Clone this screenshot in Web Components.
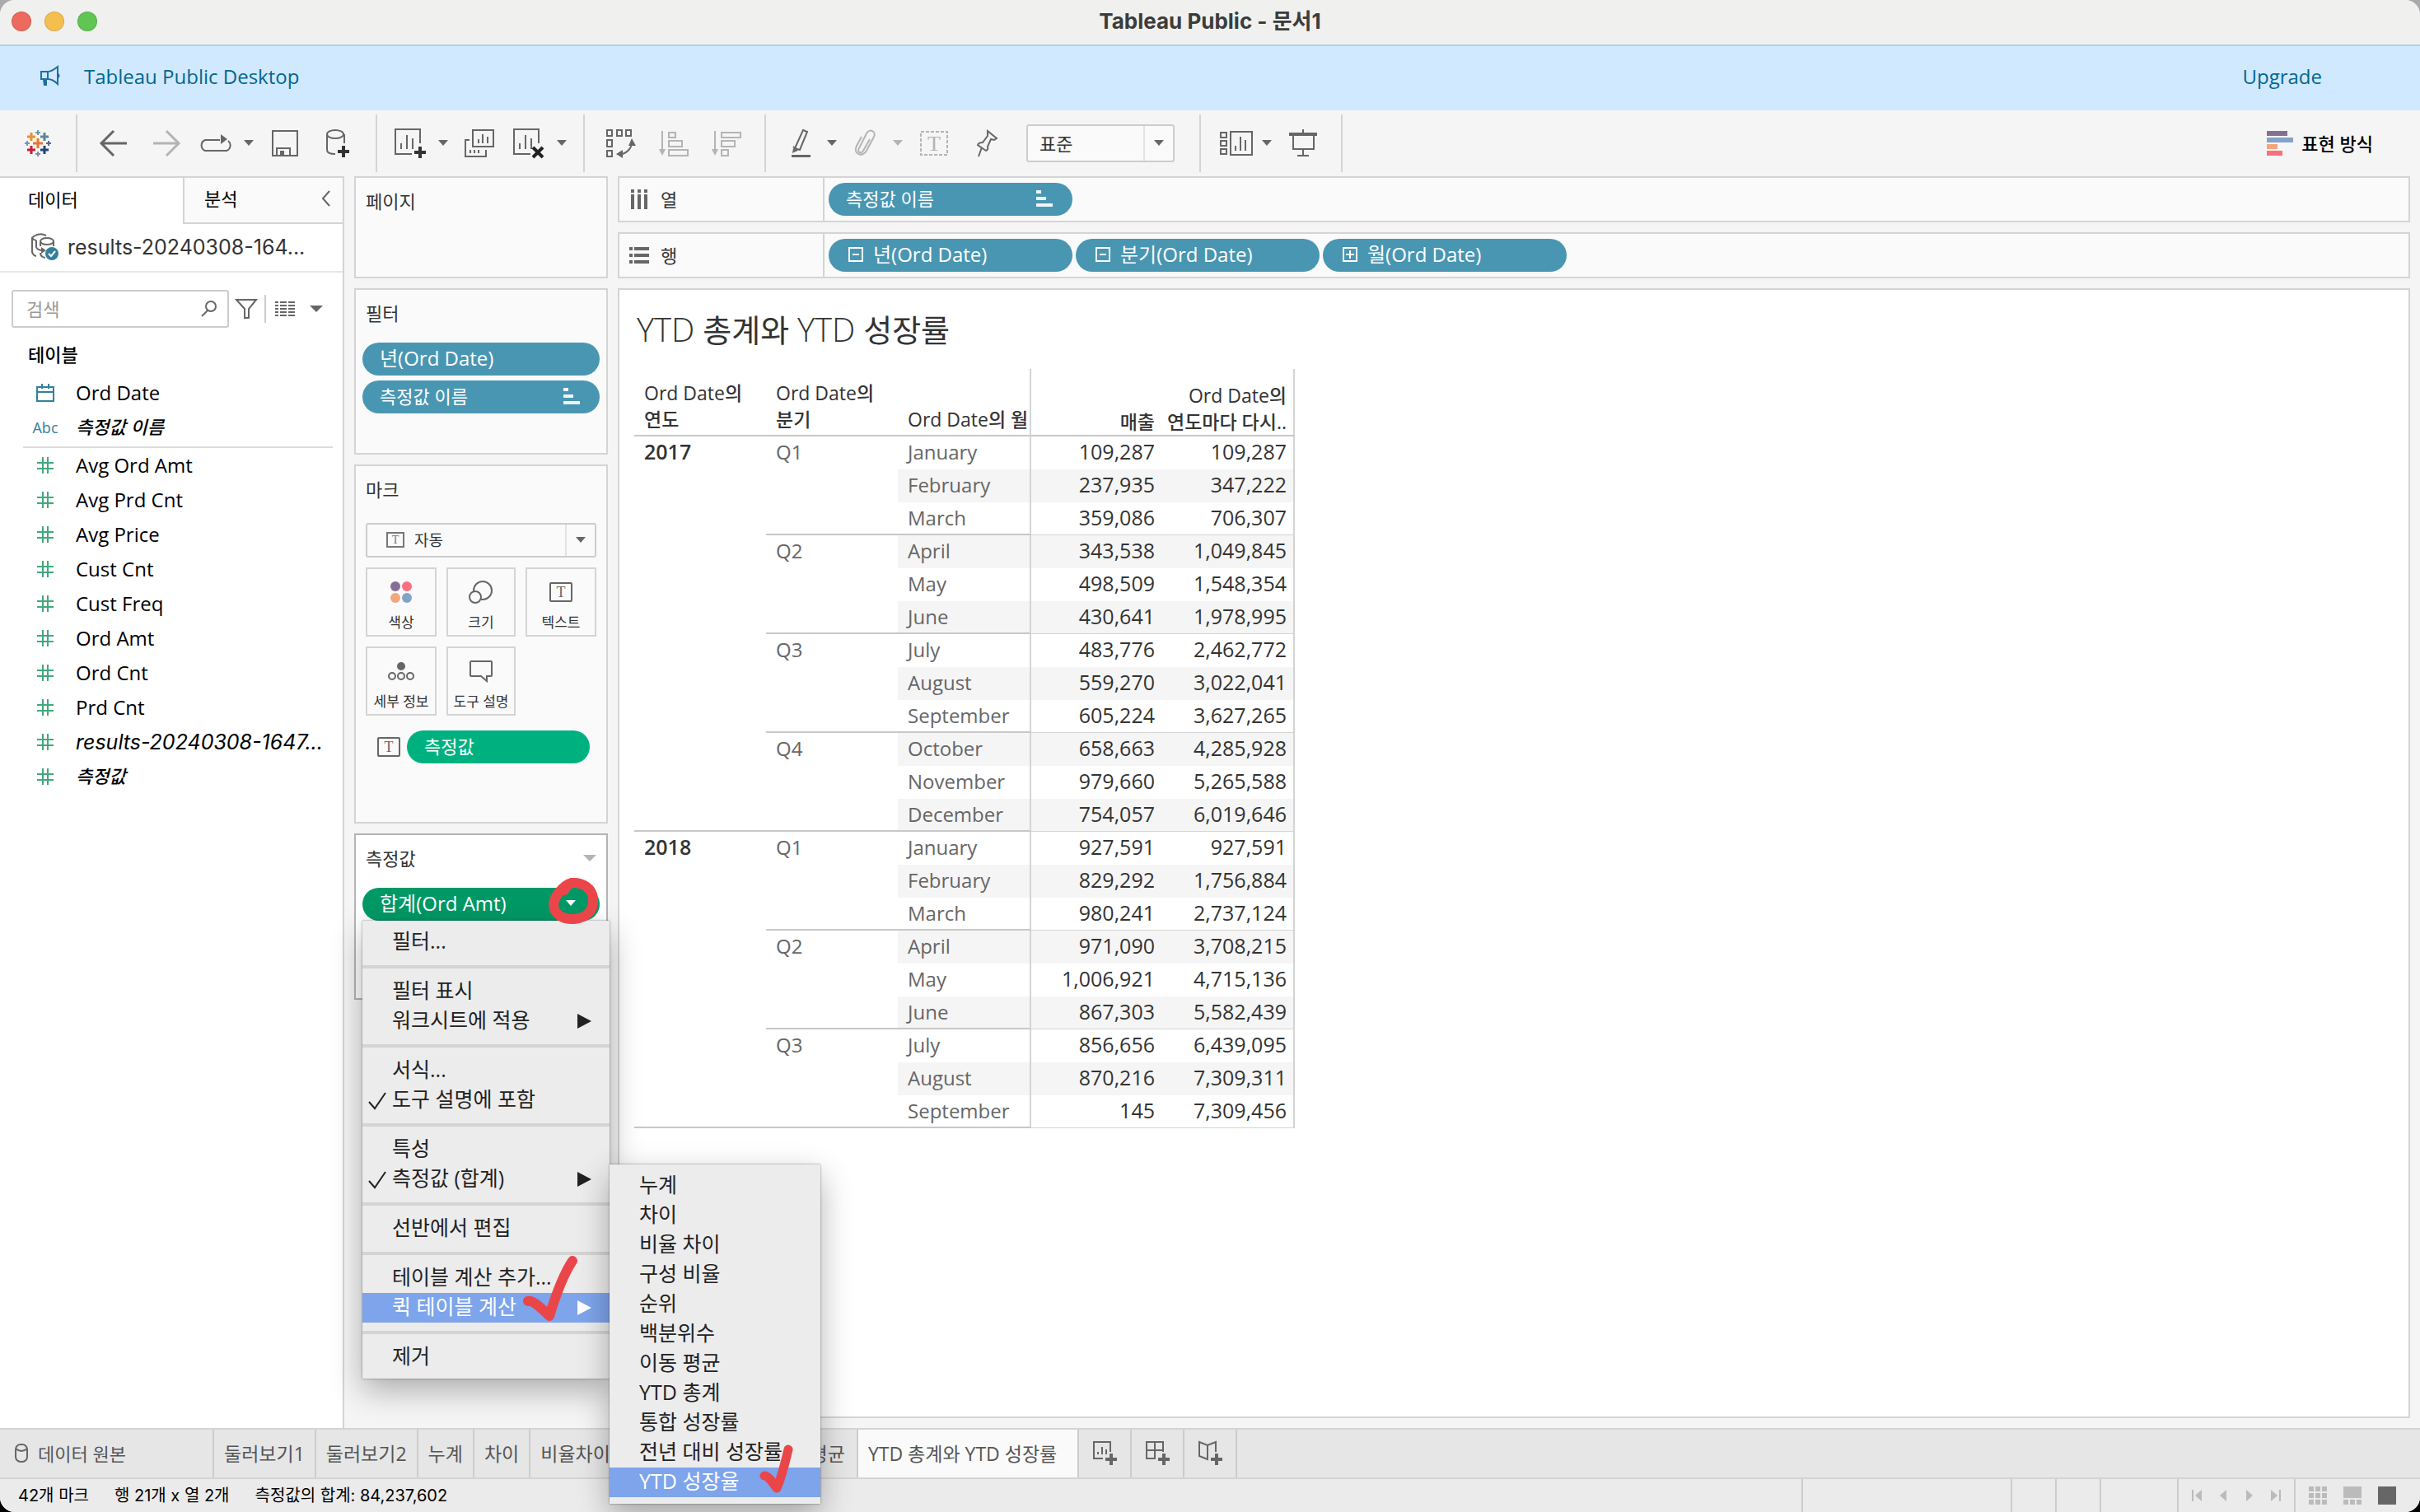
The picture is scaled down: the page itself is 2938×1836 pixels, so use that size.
<!DOCTYPE html>
<html lang="ko">
<head>
<meta charset="utf-8">
<meta name="viewport" content="width=device-width, initial-scale=1">
<title>Tableau Public - 문서1</title>
<style>
	html {
		background: linear-gradient( #aaa 50%, #000 50% ) fixed;
	}
	body {
		margin: 0;
		font-family: "Open Sans", "Noto Sans CJK KR", sans-serif;
		font-size: 22px;
		line-height: 30px;
		color: #333;
		--line: #d4d4d4;
		--blue: #4996b2;
		--green: #00b180;
		--wide: Inter, "Noto Sans CJK KR", sans-serif;
	}
</style>
</head>
<body>
<app-window></app-window>

<script>
const ICONS = {
	logo: [32, 32, `<g fill="none" stroke-width="3"><path stroke="#eb912c" d="M8 3v10M3 8h10"/><path stroke="#5b879b" d="M24 3v10M19 8h10"/><path stroke="#e8762c" d="M16 10v12M10 16h12"/><path stroke="#c72035" d="M8 19v10M3 24h10"/><path stroke="#1f447e" d="M24 19v10M19 24h10"/></g><g fill="none" stroke-width="2"><path stroke="#7099a6" d="M16 0v6M13 3h6"/><path stroke="#7099a6" d="M3 13v6M0 16h6"/><path stroke="#59669a" d="M29 13v6M26 16h6"/><path stroke="#7b8cb5" d="M16 26v6M13 29h6"/></g>`],
	horn: [26, 26, `<g fill="none" stroke="#1f6ea0" stroke-width="2"><path d="M2 7h8c5 0 8-3 12-6v21c-4-4-7-6-12-6H2zM10 7v9"/></g><path fill="#1f6ea0" d="M4 16h5v8H5zM22 8q5 4 0 8z"/>`],
	back: [34, 32, `<path d="M33 16H3M17 1 2 16l15 15" fill="none" stroke="#666" stroke-width="3"/>`],
	forward: [34, 32, `<path d="M1 16h30M17 1l15 15-15 15" fill="none" stroke="#b4b4b4" stroke-width="3"/>`],
	redo: [42, 22, `<path d="M26 7H8a7 7 0 0 0 0 13h26a7 7 0 0 0 2-12" fill="none" stroke="#666" stroke-width="2"/><path d="M27 0l8 6-8 6z" fill="#666"/>`],
	save: [32, 32, `<path d="M1 1h30v30H1zM6 31V22h16v9" fill="none" stroke="#666" stroke-width="2"/><path fill="#666" d="M10 25h5v6h-5z"/>`],
	data: [30, 34, `<path d="M2 6v19q0 5 10 5M23 6v11" fill="none" stroke="#666" stroke-width="2"/><ellipse cx="12" cy="6" rx="10" ry="5" fill="none" stroke="#666" stroke-width="2"/><path d="M22 20v14M15 27h14" stroke="#333" stroke-width="4"/>`],
	newsheet: [38, 36, `<path d="M31 18V1H1v30h20M8 25v-7M15 25V8M22 25V12" fill="none" stroke="#666" stroke-width="2"/><path d="M31 22v14M24 29h14" stroke="#333" stroke-width="4"/>`],
	duplicate: [36, 34, `<path d="M10 1h25v20H10zM6 13H1v20h25V25M17 17v-5M22 17V6M28 17V9M7 29v-4M12 29v-4M17 29v-4" fill="none" stroke="#666" stroke-width="2"/>`],
	clear: [38, 36, `<path d="M31 18V1H1v30h20M8 25v-7M15 25V8M22 25V12" fill="none" stroke="#666" stroke-width="2"/><path d="M24 23l12 12M36 23 24 35" stroke="#222" stroke-width="4"/>`],
	swap: [36, 36, `<path d="M1 2h6v7H1zM13 2h6v7h-6zM24 2h6v7h-6zM1 14h6v8H1zM1 27h6v7H1zM17 32q14-4 14-16" fill="none" stroke="#666" stroke-width="2"/><path d="M31 12l5 9h-9zM12 31l8-5v10z" fill="#666"/>`],
	sortasc: [36, 32, `<path d="M4 1v25M12 3h8v6h-8zM12 13h16v7H12zM12 24h23v7H12z" fill="none" stroke="#b4b4b4" stroke-width="2"/><path d="M0 23h8l-4 8z" fill="#b4b4b4"/>`],
	sortdesc: [36, 32, `<path d="M4 1v25M12 3h23v6H12zM12 13h16v7H12zM12 24h8v7h-8z" fill="none" stroke="#b4b4b4" stroke-width="2"/><path d="M0 23h8l-4 8z" fill="#b4b4b4"/>`],
	pen: [18, 36, `<path d="M14 2l5 2-9 22-6-2zM2 22l5 5" fill="none" stroke="#666" stroke-width="2"/><path d="M2 24l5 3-6 3zM0 32h23v3H0z" fill="#666"/>`],
	clip: [26, 34, `<path d="M19 12l-8 14c-3 5-8 1-5-3L15 5c4-7 12-2 9 4l-9 17c-5 9-17 4-12-6L9 9" fill="none" stroke="#b4b4b4" stroke-width="2"/>`],
	textmark: [34, 30, `<path d="M1 1h32v28H1z" fill="none" stroke="#b4b4b4" stroke-width="2" stroke-dasharray="4 2"/><text x="17" y="24" font-family="Liberation Serif, serif" font-size="26" text-anchor="middle" fill="#b4b4b4">T</text>`],
	pin: [28, 34, `<path d="M15 2l11 9-3 2-4-1-4 9q1 4-2 5l-10-7q1-3 6-3l6-8zM8 22l-4 11" fill="none" stroke="#666" stroke-width="2"/>`],
	cards: [34, 30, `<path d="M1 2h7v6H1zM1 12h7v6H1zM1 22h7v6H1zM13 1h26v28H13zM19 24v-6M25 24V7M31 24V11" fill="none" stroke="#666" stroke-width="2"/>`],
	present: [34, 34, `<path d="M17 0v4M5 6v18h25V6M17 24v8M10 32h14" fill="none" stroke="#666" stroke-width="2"/><path d="M0 4h34v4H0z" fill="#666"/>`],
	showme: [32, 30, `<path fill="#866f97" d="M0 0h25v6H0z"/><path fill="#83a4c8" d="M0 8h32v6H0z"/><path fill="#f3a67c" d="M0 16h13v6H0z"/><path fill="#f8707f" d="M0 24h19v6H0z"/>`],
	caret: [14, 8, `<path d="M1 0h12L7 7z" fill="currentColor"/>`],
	caretwide: [16, 8, `<path d="M0 0h16L8 8z" fill="currentColor"/>`],
	chevron: [12, 20, `<path d="M10 1 2 10l8 9" fill="none" stroke="#666" stroke-width="2"/>`],
	source: [34, 34, `<g fill="none" stroke="#666" stroke-width="2"><path d="M18 3Q10-1 3 4q-4 3 3 5M1 5v18q1 4 5 5M6 9v8q1 3 6 4M11 24q0 5 6 6"/><ellipse cx="19" cy="10" rx="8" ry="4"/><path d="M11 10v6M27 10v6"/></g><path d="M12 17l6 4-6 4z" fill="#666"/><circle cx="25" cy="25" r="8" fill="#33809e"/><path d="M21 25l3 3 5-6" fill="none" stroke="#fff" stroke-width="2"/>`],
	search: [20, 20, `<circle cx="12" cy="7" r="6" fill="none" stroke="#666" stroke-width="2"/><path d="M8 12l-7 7" stroke="#666" stroke-width="2"/>`],
	funnel: [26, 24, `<path d="M1 1h24l-9 11v11h-5V12z" fill="none" stroke="#666" stroke-width="2"/>`],
	list: [24, 18, `<path d="M0 1h4M0 5h4M0 9h4M0 13h4M0 17h4M6 1h8M6 5h8M6 9h8M6 13h8M6 17h8M16 1h8M16 5h8M16 9h8M16 13h8M16 17h8" stroke="#666" stroke-width="2"/>`],
	calendar: [22, 22, `<path d="M1 4h20v17H1zM1 10h20M7 0v6M15 0v6" fill="none" stroke="#33809e" stroke-width="2"/>`],
	abc: [34, 22, `<text x="17" y="18" font-family="Open Sans, sans-serif" font-size="18" font-weight="500" font-style="normal" text-anchor="middle" fill="#33809e">Abc</text>`],
	hash: [20, 20, `<path d="M7 0v20M13 0v20M0 7h20M0 14h20" stroke="#40a97c" stroke-width="2"/>`],
	columns: [20, 24, `<path d="M2 0v4M10 0v4M18 0v4M2 6v18M10 6v18M18 6v18" stroke="#666" stroke-width="4"/>`],
	rows: [24, 20, `<path d="M0 2h4M0 10h4M0 18h4M6 2h18M6 10h18M6 18h18" stroke="#666" stroke-width="4"/>`],
	sorted: [20, 20, `<path d="M0 2h6M0 10h12M0 18h20" stroke="#eef4f8" stroke-width="4"/>`],
	minus: [18, 18, `<path d="M1 1h16v16H1zM5 9h8" fill="none" stroke="#fff" stroke-width="2"/>`],
	plus: [18, 18, `<path d="M1 1h16v16H1zM4 9h10M9 4v10" fill="none" stroke="#fff" stroke-width="2"/>`],
	color: [26, 26, `<circle cx="6" cy="6" r="6" fill="#866f97"/><circle cx="20" cy="6" r="6" fill="#f8707f"/><circle cx="6" cy="20" r="6" fill="#f3a67c"/><circle cx="20" cy="20" r="6" fill="#83a4c8"/>`],
	size: [30, 28, `<g fill="#fafafa" stroke="#666" stroke-width="2"><circle cx="17" cy="12" r="11"/><circle cx="8" cy="20" r="7"/></g>`],
	text: [28, 24, `<rect x="1" y="1" width="26" height="22" rx="1" fill="none" stroke="#666" stroke-width="2"/><text x="14" y="18" font-family="Liberation Serif, serif" font-size="18" text-anchor="middle" fill="#666">T</text>`],
	textsmall: [22, 20, `<path d="M1 1h20v17H1z" fill="none" stroke="#777" stroke-width="2"/><text x="11" y="14" font-family="Liberation Serif, serif" font-size="14" text-anchor="middle" fill="#777">T</text>`],
	detail: [32, 22, `<circle cx="16" cy="5" r="5" fill="#666"/><g fill="none" stroke="#666" stroke-width="2"><circle cx="5" cy="17" r="4"/><circle cx="16" cy="17" r="4"/><circle cx="27" cy="17" r="4"/></g>`],
	tooltip: [28, 26, `<path d="M2 1h24q1 0 1 1v16q0 1-1 1h-5v6l-7-6H2q-1 0-1-1V2q0-1 1-1z" fill="none" stroke="#666" stroke-width="2"/>`],
	cylinder: [16, 24, `<rect x="1" y="1" width="14" height="21" rx="6" fill="none" stroke="#666" stroke-width="2"/><path d="M1 6q7 6 14 0" fill="none" stroke="#666" stroke-width="2"/>`],
	addsheet: [28, 30, `<path d="M21 13V1H1v20h11M6 16v-3M11 16V7M16 16v-6" fill="none" stroke="#666" stroke-width="2"/><path d="M22 15v14M15 22h14" stroke="#666" stroke-width="4"/>`],
	adddash: [28, 30, `<path d="M21 13V1H1v20h11M11 1v20M1 11h20" fill="none" stroke="#666" stroke-width="2"/><path d="M22 15v14M15 22h14" stroke="#666" stroke-width="4"/>`],
	addstory: [28, 30, `<path d="M21 13V1L11 5 1 1v17l10 4V5" fill="none" stroke="#666" stroke-width="2"/><path d="M22 15v14M15 22h14" stroke="#666" stroke-width="4"/>`],
	first: [12, 14, `<path d="M0 0h2v14H0zM12 0v14L4 7z" fill="#bbb"/>`],
	prev: [12, 14, `<path d="M10 0v14L2 7z" fill="#bbb"/>`],
	next: [12, 14, `<path d="M2 0v14l8-7z" fill="#bbb"/>`],
	last: [12, 14, `<path d="M10 0h2v14h-2zM0 0v14l8-7z" fill="#bbb"/>`],
	grid: [22, 22, `<path d="M0 3h6M8 3h6M16 3h6M0 11h6M8 11h6M16 11h6M0 19h6M8 19h6M16 19h6" stroke="#bbb" stroke-width="6"/>`],
	strip: [22, 22, `<path d="M0 0h22v14H0zM0 16h6v6H0zM8 16h6v6H8zM16 16h6v6h-6z" fill="#bbb"/>`],
	single: [22, 22, `<path d="M0 0h22v22H0z" fill="#666"/>`],
	tick: [22, 22, `<path d="M1 12l7 8L21 1" fill="none" stroke="#222" stroke-width="2"/>`],
	arrow: [18, 18, `<path d="M1 0v18l17-9z" fill="currentColor"/>`],
	inkring: [62, 60, `<path d="M29 8C18 11 7 26 7 35c1 12 13 18 25 17 14-1 24-9 23-25C54 15 43 7 29 8c-4 2-7 6-9 9" fill="none" stroke="#ea464a" stroke-width="12" stroke-linecap="round"/>`],
	inktick: [68, 80, `<path d="M8 56q5-3 26 18Q48 28 62 7" fill="none" stroke="#ea464a" stroke-width="12" stroke-linecap="round" stroke-linejoin="round"/>`],
	inkticksmall: [46, 62, `<path d="M9 40q4-1 15 15Q30 42 38 8" fill="none" stroke="#ea464a" stroke-width="11" stroke-linecap="round" stroke-linejoin="round"/>`]
};

const SALES = [
	['2017', [
		['Q1', [['January', '109,287', '109,287'], ['February', '237,935', '347,222'], ['March', '359,086', '706,307']]],
		['Q2', [['April', '343,538', '1,049,845'], ['May', '498,509', '1,548,354'], ['June', '430,641', '1,978,995']]],
		['Q3', [['July', '483,776', '2,462,772'], ['August', '559,270', '3,022,041'], ['September', '605,224', '3,627,265']]],
		['Q4', [['October', '658,663', '4,285,928'], ['November', '979,660', '5,265,588'], ['December', '754,057', '6,019,646']]]
	]],
	['2018', [
		['Q1', [['January', '927,591', '927,591'], ['February', '829,292', '1,756,884'], ['March', '980,241', '2,737,124']]],
		['Q2', [['April', '971,090', '3,708,215'], ['May', '1,006,921', '4,715,136'], ['June', '867,303', '5,582,439']]],
		['Q3', [['July', '856,656', '6,439,095'], ['August', '870,216', '7,309,311'], ['September', '145', '7,309,456']]]
	]]
];

const RESET = `
	* { box-sizing: border-box; }
	button, select, input {
		margin: 0;
		padding: 0;
		border: 0;
		background: none;
		color: inherit;
		font: inherit;
		text-align: left;
	}
	h2, h3, ul { margin: 0; padding: 0; font-size: inherit; font-weight: 400; list-style: none; }
`;

// Registers an element whose shadow root is cloned from a template
function define(name, markup, setup) {
	const template = document.createElement('template');
	template.innerHTML = `<style>${RESET}</style>${markup}`;

	customElements.define(name, class extends HTMLElement {
		constructor() {
			super();
			this.attachShadow({ mode: 'open' }).appendChild(template.content.cloneNode(true));
		}

		connectedCallback() {
			if (setup) {
				setup(this, this.shadowRoot);
			}
		}
	});
}

define('ui-icon', `
	<style>
		:host { display: inline-flex; flex: none; }
		svg { display: block; overflow: visible; }
	</style>
	<span></span>
`, (host, root) => {
	const [width, height, shapes] = ICONS[host.getAttribute('name')];
	root.querySelector('span').innerHTML = `<svg width="${width}" height="${height}" viewBox="0 0 ${width} ${height}" aria-hidden="true">${shapes}</svg>`;
});

define('title-bar', `
	<style>
		:host {
			display: grid;
			grid-template-columns: 1fr auto 1fr;
			align-items: center;
			height: 54px;
			padding: 0 14px 2px;
			box-sizing: border-box;
			background: #f0f0ee;
		}
		div { display: flex; gap: 16px; }
		button { width: 24px; height: 24px; border-radius: 50%; border: 1px solid rgba( 0,0,0,0.12 ); }
		.close { background: #ed6a5e; }
		.min { background: #f5bf4f; }
		.max { background: #61c554; }
		span { font: 700 26px/30px var(--wide); color: #3c3c3c; }
	</style>
	<div>
		<button class="close" aria-label="닫기"></button>
		<button class="min" aria-label="최소화"></button>
		<button class="max" aria-label="확대"></button>
	</div>
	<span><slot></slot></span>
`);

define('promo-banner', `
	<style>
		:host {
			display: flex;
			align-items: center;
			box-sizing: border-box;
			height: 80px;
			padding: 0 119px 4px 48px;
			border-top: 2px solid #b0d0ea;
			background: #d0e9ff;
			font-size: 24px;
			color: #03678f;
		}
		span { flex: 1; margin-left: 28px; }
		a { color: inherit; text-decoration: none; }
	</style>
	<ui-icon name="horn"></ui-icon>
	<span><slot></slot></span>
	<a href="#upgrade">Upgrade</a>
`);

define('tool-button', `
	<style>
		:host { display: flex; }
		button { display: flex; align-items: center; justify-content: center; width: 64px; height: 70px; }
		:host([menu]) button { width: 56px; }
		:host([menu]) button + button { width: 24px; }
		button + button { display: none; color: #666; }
		:host([menu]) button + button { display: flex; }
		:host([off]) button { color: #b4b4b4; }
	</style>
	<button class="main"></button>
	<button aria-label="메뉴"><ui-icon name="caret"></ui-icon></button>
`, (host, root) => {
	const icon = host.getAttribute('icon');
	const button = root.querySelector('.main');
	button.innerHTML = `<ui-icon name="${icon}"></ui-icon>`;
	button.setAttribute('aria-label', icon);
});

define('select-box', `
	<style>
		:host { display: flex; position: relative; height: 42px; background: #fafafa; }
		select { appearance: none; width: 100%; padding-left: 14px; border: 2px solid #ccc; border-radius: 3px; }
		.open {
			position: absolute;
			top: 2px;
			right: 2px;
			bottom: 2px;
			display: flex;
			align-items: center;
			justify-content: center;
			width: 36px;
			border-left: 2px solid #e2e2e2;
			color: #666;
			pointer-events: none;
		}
		.lead { display: none; position: absolute; left: 25px; top: 11px; }
		:host([lead]) .lead { display: flex; }
		:host([lead]) select { padding-left: 57px; font-size: 19px; }
	</style>
	<select><option></option></select>
	<ui-icon class="lead" name="textsmall"></ui-icon>
	<span class="open"><ui-icon name="caret"></ui-icon></span>
`, (host, root) => {
	root.querySelector('option').textContent = host.getAttribute('value');
	root.querySelector('select').setAttribute('aria-label', host.getAttribute('label'));
});

define('tool-bar', `
	<style>
		:host { display: flex; align-items: center; height: 80px; padding-right: 57px; background: #f5f5f5; }
		div { display: flex; align-items: center; height: 70px; padding: 0 14px 0 12px; border-right: 2px solid var(--line); }
		.home { width: 94px; padding: 0; justify-content: center; }
		select-box { width: 180px; height: 46px; margin: 0 16px; }
		.show { display: flex; align-items: center; gap: 10px; margin-left: auto; font-weight: 500; color: #000; }
	</style>
	<div class="home"><tool-button icon="logo"></tool-button></div>
	<div>
		<tool-button icon="back"></tool-button>
		<tool-button icon="forward"></tool-button>
		<tool-button icon="redo" menu></tool-button>
		<tool-button icon="save"></tool-button>
		<tool-button icon="data"></tool-button>
	</div>
	<div>
		<tool-button icon="newsheet" menu></tool-button>
		<tool-button icon="duplicate"></tool-button>
		<tool-button icon="clear" menu></tool-button>
	</div>
	<div>
		<tool-button icon="swap"></tool-button>
		<tool-button icon="sortasc"></tool-button>
		<tool-button icon="sortdesc"></tool-button>
	</div>
	<div>
		<tool-button icon="pen" menu></tool-button>
		<tool-button icon="clip" menu off></tool-button>
		<tool-button icon="textmark"></tool-button>
		<tool-button icon="pin"></tool-button>
		<select-box value="표준" label="맞춤"></select-box>
	</div>
	<div>
		<tool-button icon="cards" menu></tool-button>
		<tool-button icon="present"></tool-button>
	</div>
	<button class="show"><ui-icon name="showme"></ui-icon>표현 방식</button>
`);

define('field-item', `
	<style>
		:host { display: flex; align-items: center; height: 42px; font-size: 24px; color: #000; }
		:host([calc]) { font-family: var(--wide); font-size: 25px; font-style: italic; }
		:host([small]) { font-size: 22px; font-weight: 500; }
		.icon { display: flex; justify-content: center; width: 36px; margin: 0 19px 0 37px; }
		.name { white-space: nowrap; }
	</style>
	<span class="icon"></span>
	<span class="name"><slot></slot></span>
`, (host, root) => {
	root.querySelector('.icon').innerHTML = `<ui-icon name="${host.getAttribute('icon')}"></ui-icon>`;
});

define('data-pane', `
	<style>
		:host { display: flex; flex-direction: column; box-sizing: border-box; width: 418px; border: solid var(--line); border-width: 2px 2px 0 0; background: #fff; }
		.tabs { display: flex; height: 56px; }
		.tabs button { padding: 0 0 4px 34px; width: 222px; color: #000; }
		.tabs .analytics {
			display: flex;
			align-items: center;
			justify-content: space-between;
			flex: 1;
			padding: 0 14px 4px 24px;
			border: solid var(--line);
			border-width: 0 0 2px 2px;
			background: #fafafa;
		}
		.source { display: flex; align-items: center; gap: 10px; height: 59px; padding: 0 0 2px 38px; border-bottom: 2px solid #e6e6e6; font-family: var(--wide); font-size: 25px; }
		.find { display: flex; align-items: center; margin: 21px 24px 0 14px; height: 46px; }
		label { display: flex; align-items: center; width: 264px; height: 46px; margin-right: 8px; padding: 0 12px 0 16px; border: 2px solid #ccc; border-radius: 3px; }
		input { flex: 1; min-width: 0; outline: 0; }
		input::placeholder { color: #999; opacity: 1; }
		.rule { width: 2px; height: 34px; margin: 0 11px 0 9px; background: #ccc; }
		.find ui-icon:last-child { margin-left: auto; color: #666; }
		h3 { margin: 17px 0 11px 34px; font-weight: 500; color: #000; }
		.dims { margin: 0 12px 0 28px; padding-bottom: 2px; border-bottom: 2px solid #ddd; }
		.dims field-item { margin-left: -28px; }
	</style>
	<div class="tabs">
		<button>데이터</button>
		<button class="analytics">분석 <ui-icon name="chevron"></ui-icon></button>
	</div>
	<div class="source"><ui-icon name="source"></ui-icon>results-20240308-164...</div>
	<div class="find">
		<label><input type="text" placeholder="검색" aria-label="검색"><ui-icon name="search"></ui-icon></label>
		<ui-icon name="funnel"></ui-icon>
		<span class="rule"></span>
		<ui-icon name="list"></ui-icon>
		<ui-icon name="caretwide"></ui-icon>
	</div>
	<h3>테이블</h3>
	<div class="dims">
		<field-item icon="calendar">Ord Date</field-item>
		<field-item icon="abc" calc small>측정값 이름</field-item>
	</div>
	<field-item icon="hash">Avg Ord Amt</field-item>
	<field-item icon="hash">Avg Prd Cnt</field-item>
	<field-item icon="hash">Avg Price</field-item>
	<field-item icon="hash">Cust Cnt</field-item>
	<field-item icon="hash">Cust Freq</field-item>
	<field-item icon="hash">Ord Amt</field-item>
	<field-item icon="hash">Ord Cnt</field-item>
	<field-item icon="hash">Prd Cnt</field-item>
	<field-item icon="hash" calc>results-20240308-1647...</field-item>
	<field-item icon="hash" calc small>측정값</field-item>
`);

define('field-pill', `
	<style>
		:host { display: block; height: 40px; border-radius: 20px; background: var(--blue); font-size: 24px; color: #fff; }
		:host([measure]) { background: var(--green); }
		:host([active]) { background: #009966; }
		:host([small]) { font-size: 22px; }
		button { display: flex; align-items: center; gap: 12px; width: 100%; height: 40px; padding: 0 24px 2px 21px; white-space: nowrap; }
		:host([lead]) button { padding-left: 24px; }
		.text { flex: 1; }
	</style>
	<button><slot name="lead"></slot><span class="text"><slot></slot></span><slot name="tail"></slot></button>
`);

define('shelf-card', `
	<style>
		:host { display: block; box-sizing: border-box; padding: 13px 8px; border: 2px solid var(--line); background: #fafafa; }
		:host([active]) { border-color: #b4b4b4; background: #fff; }
		header { display: flex; align-items: center; justify-content: space-between; height: 30px; margin: 0 4px 21px; }
	</style>
	<header><h3></h3><slot name="action"></slot></header>
	<slot></slot>
`, (host, root) => {
	root.querySelector('h3').textContent = host.getAttribute('label');
});

define('mark-button', `
	<style>
		:host { display: block; }
		button {
			display: flex;
			flex-direction: column;
			align-items: center;
			width: 100%;
			height: 84px;
			border: 2px solid var(--line);
			font-size: 17px;
			line-height: 24px;
			white-space: nowrap;
		}
		span { display: flex; align-items: center; height: 53px; padding-top: 2px; }
	</style>
	<button><span></span><slot></slot></button>
`, (host, root) => {
	root.querySelector('span').innerHTML = `<ui-icon name="${host.getAttribute('icon')}"></ui-icon>`;
});

define('context-menu', `
	<style>
		:host {
			position: absolute;
			z-index: 10;
			display: block;
			padding: 8px 0;
			background: #ececec;
			box-shadow: 0 0 2px rgba( 0,0,0,0.5 ), 0 14px 36px rgba( 0,0,0,0.3 );
			color: #222;
		}
		::slotted(hr) { height: 4px; margin: 10px 0; border: 0; background: #d4d4d4; }
	</style>
	<slot></slot>
`);

define('menu-item', `
	<style>
		:host { display: block; position: relative; }
		button { display: flex; align-items: center; width: 100%; height: 36px; padding: 0 22px 0 0; font-size: 25px; white-space: nowrap; }
		:host([selected]) button { background: #7ea4eb; color: #fff; }
		.check { display: flex; justify-content: center; width: 36px; padding-top: 2px; }
		.check ui-icon, .arrow { visibility: hidden; }
		:host([checked]) .check ui-icon, :host([more]) .arrow { visibility: visible; }
		.text { flex: 1; height: 36px; line-height: 32px; }
	</style>
	<button>
		<span class="check"><ui-icon name="tick"></ui-icon></span>
		<span class="text"><slot></slot></span>
		<ui-icon class="arrow" name="arrow"></ui-icon>
	</button>
	<slot name="over"></slot>
`);

define('shelf-column', `
	<style>
		:host { display: flex; flex-direction: column; gap: 12px; width: 308px; }
		.pages { height: 124px; }
		.filters { height: 202px; }
		.filters field-pill + field-pill { margin-top: 6px; }
		.marks { height: 436px; }
		.inner { display: grid; grid-template-columns: 86px 84px 86px; gap: 12px; margin: 26px 4px 0; }
		.inner select-box { grid-column: 1 / 4; }
		.encoding { display: flex; align-items: center; gap: 8px; margin: 18px 12px 0 18px; }
		.encoding field-pill { flex: 1; }
		.measures { height: 202px; }
		.faint { color: #b4b4b4; }
		.anchor { position: relative; }
		.anchor > context-menu { top: 40px; left: 0; width: 300px; }
		.anchor > field-pill ui-icon { margin-right: 4px; }
		.sub { left: 300px; top: -156px; width: 256px; }
		.ink { position: absolute; z-index: 20; pointer-events: none; }
		.ring { left: 225px; top: -14px; }
		.big { left: 193px; top: -46px; }
		.tiny { left: 179px; top: -30px; }
	</style>
	<shelf-card class="pages" label="페이지"></shelf-card>
	<shelf-card class="filters" label="필터">
		<field-pill>년(Ord Date)</field-pill>
		<field-pill small>측정값 이름<ui-icon slot="tail" name="sorted"></ui-icon></field-pill>
	</shelf-card>
	<shelf-card class="marks" label="마크">
		<div class="inner">
			<select-box value="자동" label="마크 유형" lead></select-box>
			<mark-button icon="color">색상</mark-button>
			<mark-button icon="size">크기</mark-button>
			<mark-button icon="text">텍스트</mark-button>
			<mark-button icon="detail">세부 정보</mark-button>
			<mark-button icon="tooltip">도구 설명</mark-button>
		</div>
		<div class="encoding">
			<ui-icon name="text"></ui-icon>
			<field-pill measure small>측정값</field-pill>
		</div>
	</shelf-card>
	<shelf-card class="measures" label="측정값" active>
		<ui-icon slot="action" class="faint" name="caretwide"></ui-icon>
		<div class="anchor">
			<field-pill measure active>합계(Ord Amt)<ui-icon slot="tail" name="caret"></ui-icon></field-pill>
			<context-menu>
				<menu-item>필터...</menu-item>
				<hr>
				<menu-item>필터 표시</menu-item>
				<menu-item more>워크시트에 적용</menu-item>
				<hr>
				<menu-item>서식...</menu-item>
				<menu-item checked>도구 설명에 포함</menu-item>
				<hr>
				<menu-item>특성</menu-item>
				<menu-item checked more>측정값 (합계)</menu-item>
				<hr>
				<menu-item>선반에서 편집</menu-item>
				<hr>
				<menu-item>테이블 계산 추가...</menu-item>
				<menu-item selected more>퀵 테이블 계산
					<ui-icon slot="over" class="ink big" name="inktick"></ui-icon>
					<context-menu slot="over" class="sub">
						<menu-item>누계</menu-item>
						<menu-item>차이</menu-item>
						<menu-item>비율 차이</menu-item>
						<menu-item>구성 비율</menu-item>
						<menu-item>순위</menu-item>
						<menu-item>백분위수</menu-item>
						<menu-item>이동 평균</menu-item>
						<menu-item>YTD 총계</menu-item>
						<menu-item>통합 성장률</menu-item>
						<menu-item>전년 대비 성장률</menu-item>
						<menu-item selected>YTD 성장율<ui-icon slot="over" class="ink tiny" name="inkticksmall"></ui-icon></menu-item>
					</context-menu>
				</menu-item>
				<hr>
				<menu-item>제거</menu-item>
			</context-menu>
			<ui-icon class="ink ring" name="inkring"></ui-icon>
		</div>
	</shelf-card>
`);

define('axis-shelf', `
	<style>
		:host { display: flex; box-sizing: border-box; height: 56px; border: 2px solid var(--line); background: #fafafa; }
		h3 { display: flex; align-items: center; gap: 14px; width: 249px; padding-left: 12px; border-right: 2px solid var(--line); }
		h3 span { display: flex; justify-content: center; width: 24px; }
		div { display: flex; gap: 4px; padding: 6px 5px; }
		::slotted(field-pill) { width: 296px; }
	</style>
	<h3><span></span></h3>
	<div><slot></slot></div>
`, (host, root) => {
	root.querySelector('span').innerHTML = `<ui-icon name="${host.getAttribute('icon')}"></ui-icon>`;
	root.querySelector('h3').append(host.getAttribute('label'));
});

define('cross-table', `
	<style>
		:host { display: block; }
		table { table-layout: fixed; width: 802px; border-collapse: separate; border-spacing: 0; font-size: 24px; }
		th, td { height: 40px; padding: 0 0 0 12px; font-weight: 400; text-align: left; white-space: nowrap; }
		thead th { height: 82px; padding-bottom: 3px; border-bottom: 2px solid #c8c8c8; vertical-align: bottom; font-size: 23px; font-weight: 500; line-height: 32px; }
		tbody th { vertical-align: top; line-height: 38px; color: #666; }
		tbody .year { font-size: 25px; font-weight: 600; line-height: 36px; color: #333; }
		td { vertical-align: top; font-size: 25px; line-height: 36px; }
		.num { padding: 0 10px 0 0; text-align: right; }
		.num:last-child { padding-right: 8px; border-right: 2px solid var(--line); }
		.month { border-right: 2px solid var(--line); }
		.band .month, .band td { background: #f5f5f5; }
		.year, .quarter, .end .month { border-bottom: 2px solid #c8c8c8; }
		.end td { border-bottom: 1px solid #d4d4d4; }
	</style>
	<table>
		<colgroup><col width="160"><col width="160"><col width="162"><col width="160"><col width="160"></colgroup>
		<thead>
			<tr>
				<th>Ord Date의<br>연도</th>
				<th>Ord Date의<br>분기</th>
				<th class="month">Ord Date의 월</th>
				<th class="num">매출</th>
				<th class="num">Ord Date의<br>연도마다 다시..</th>
			</tr>
		</thead>
		<tbody></tbody>
	</table>
`, (host, root) => {
	let count = 0;
	let html = '';
	SALES.forEach(([year, quarters]) => {
		quarters.forEach(([quarter, months], q) => {
			months.forEach(([month, sales, total], m) => {
				const names = [count % 2 ? 'band' : '', m === months.length - 1 ? 'end' : ''].join(' ').trim();
				html += `<tr class="${names}">`;
				if (q === 0 && m === 0) {
					html += `<th class="year" rowspan="${quarters.length * 3}">${year}</th>`;
				}
				if (m === 0) {
					html += `<th class="quarter" rowspan="${months.length}">${quarter}</th>`;
				}
				html += `<th class="month">${month}</th><td class="num">${sales}</td><td class="num">${total}</td></tr>`;
				count++;
			});
		});
	});
	root.querySelector('tbody').innerHTML = html;
});

define('work-sheet', `
	<style>
		:host { display: flex; flex-direction: column; flex: 1; gap: 12px; min-width: 0; }
		section { flex: 1; padding: 23px 18px; border: 2px solid var(--line); background: #fff; }
		h2 { height: 50px; margin: 0 0 23px 3px; font-size: 38px; line-height: 50px; }
		h2 span { font-size: 40px; font-weight: 300; }
	</style>
	<axis-shelf icon="columns" label="열">
		<field-pill small>측정값 이름<ui-icon slot="tail" name="sorted"></ui-icon></field-pill>
	</axis-shelf>
	<axis-shelf icon="rows" label="행">
		<field-pill lead><ui-icon slot="lead" name="minus"></ui-icon>년(Ord Date)</field-pill>
		<field-pill lead><ui-icon slot="lead" name="minus"></ui-icon>분기(Ord Date)</field-pill>
		<field-pill lead><ui-icon slot="lead" name="plus"></ui-icon>월(Ord Date)</field-pill>
	</axis-shelf>
	<section>
		<h2><span>YTD</span> 총계와 <span>YTD</span> 성장률</h2>
		<cross-table></cross-table>
	</section>
`);

define('sheet-tabs', `
	<style>
		:host { display: flex; box-sizing: border-box; height: 62px; border: solid var(--line); border-width: 2px 0; background: #e6e6e6; font-size: 23px; color: #555; }
		button { display: flex; align-items: center; justify-content: center; padding: 0 12px; border-right: 2px solid #ccc; white-space: nowrap; }
		.source { justify-content: flex-start; gap: 12px; width: 260px; padding-left: 18px; font-size: 22px; }
		.wide { width: 287px; justify-content: flex-end; padding-right: 14px; }
		.on { width: 268px; justify-content: flex-start; background: #fafafa; }
		.add { width: 64px; }
	</style>
	<button class="source"><ui-icon name="cylinder"></ui-icon>데이터 원본</button>
	<button>둘러보기1</button>
	<button>둘러보기2</button>
	<button>누계</button>
	<button>차이</button>
	<button>비율차이</button>
	<button class="wide">평균</button>
	<button class="on">YTD 총계와 YTD 성장률</button>
	<button class="add" aria-label="새 워크시트"><ui-icon name="addsheet"></ui-icon></button>
	<button class="add" aria-label="새 대시보드"><ui-icon name="adddash"></ui-icon></button>
	<button class="add" aria-label="새 스토리"><ui-icon name="addstory"></ui-icon></button>
`);

define('status-bar', `
	<style>
		:host { display: flex; align-items: center; box-sizing: border-box; height: 40px; padding-left: 22px; background: #ebebeb; font-family: var(--wide); font-size: 20px; color: #000; }
		span { margin-right: 31px; white-space: nowrap; }
		div { display: flex; align-items: center; justify-content: center; height: 40px; border-left: 2px solid #ccc; }
		.first { width: 254px; margin-left: auto; }
		.slot { width: 54px; }
		.gap { width: 94px; }
		.nav { gap: 20px; width: 142px; }
		.views { gap: 20px; width: 153px; padding-right: 13px; }
		button { display: flex; }
	</style>
	<span>42개 마크</span>
	<span>행 21개 x 열 2개</span>
	<span>측정값의 합계: 84,237,602</span>
	<div class="first"></div>
	<div class="slot"></div>
	<div class="slot"></div>
	<div class="gap"></div>
	<div class="nav">
		<button aria-label="처음"><ui-icon name="first"></ui-icon></button>
		<button aria-label="이전"><ui-icon name="prev"></ui-icon></button>
		<button aria-label="다음"><ui-icon name="next"></ui-icon></button>
		<button aria-label="마지막"><ui-icon name="last"></ui-icon></button>
	</div>
	<div class="views">
		<button aria-label="시트 정렬"><ui-icon name="grid"></ui-icon></button>
		<button aria-label="필름 스트립"><ui-icon name="strip"></ui-icon></button>
		<button aria-label="탭"><ui-icon name="single"></ui-icon></button>
	</div>
`);

define('app-window', `
	<style>
		:host { display: flex; flex-direction: column; min-height: 100vh; border-radius: 18px; background: #f5f5f5; overflow: hidden; }
		main { display: flex; flex: 1; }
		shelf-column { margin: 0 12px; }
		work-sheet { margin: 0 12px 12px 0; }
	</style>
	<title-bar>Tableau Public - 문서1</title-bar>
	<promo-banner>Tableau Public Desktop</promo-banner>
	<tool-bar></tool-bar>
	<main>
		<data-pane></data-pane>
		<shelf-column></shelf-column>
		<work-sheet></work-sheet>
	</main>
	<sheet-tabs></sheet-tabs>
	<status-bar></status-bar>
`);
</script>
</body>
</html>
